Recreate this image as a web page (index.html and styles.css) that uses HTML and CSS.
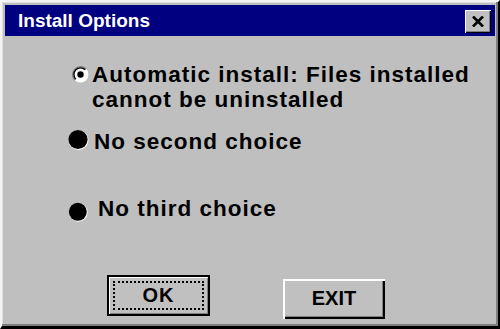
FILE: index.html
```html
<!DOCTYPE html>
<html>
<head>
<meta charset="utf-8">
<title>Install Options</title>
<link rel="stylesheet" href="styles.css">
</head>
<body>
<div class="window">
  <div class="titlebar">
    <span class="title">Install Options</span>
    <button class="close" aria-label="Close">
      <svg width="12" height="11" viewBox="0 0 12 11"><path d="M1 0.5 L11 10.5 M11 0.5 L1 10.5" stroke="#000" stroke-width="2.6" fill="none"/></svg>
    </button>
  </div>
  <div class="options">
    <div class="option opt1">
      <svg class="radio radio-on" width="17" height="17" viewBox="0 0 16 16">
        <circle cx="8" cy="8" r="7.5" fill="#fff"/>
        <path d="M2.7 13.3 A7.5 7.5 0 0 1 13.3 2.7" stroke="#808080" stroke-width="1.4" fill="none"/>
        <path d="M3.6 12.4 A6.2 6.2 0 0 1 12.4 3.6" stroke="#000" stroke-width="1.3" fill="none"/>
        <circle cx="8" cy="8" r="3" fill="#000"/>
      </svg>
      <span class="label"><span class="line">Automatic install: Files installed</span><span class="line">cannot be uninstalled</span></span>
    </div>
    <div class="option opt2">
      <svg class="radio radio-fill" width="21" height="22" viewBox="0 0 21 22">
        <circle cx="10.5" cy="11" r="10" fill="#fff"/>
        <circle cx="10" cy="10.5" r="9.6" fill="#000"/>
      </svg>
      <span class="label">No second choice</span>
    </div>
    <div class="option opt3">
      <svg class="radio radio-fill" width="20" height="20" viewBox="0 0 20 20">
        <circle cx="10.3" cy="10.3" r="9.4" fill="#fff"/>
        <circle cx="9.8" cy="9.8" r="9" fill="#000"/>
      </svg>
      <span class="label">No third choice</span>
    </div>
  </div>
  <div class="buttons">
    <button class="btn btn-default"><span class="focus">OK</span></button>
    <button class="btn btn-exit">EXIT</button>
  </div>
</div>
</body>
</html>
```

FILE: styles.css
```css
html, body {
  margin: 0;
  padding: 0;
  background: #c0c0c0;
}
.window {
  width: 500px;
  height: 329px;
  box-sizing: border-box;
  background: #bfbfbf;
  border-top: 2px solid #f4f4f4;
  border-left: 2px solid #f4f4f4;
  border-right: 2px solid #000;
  border-bottom: 3px solid #000;
  box-shadow: inset -2px -2px 0 #808080, inset 1px 1px 0 #dfdfdf;
  display: flex;
  flex-direction: column;
  font-family: "Liberation Sans", Arial, sans-serif;
}
.titlebar {
  margin: 3px 3px 0 3px;
  height: 31px;
  background: #000080;
  display: flex;
  align-items: center;
  justify-content: space-between;
  padding: 0 4px 0 13px;
}
.title {
  color: #fff;
  font-weight: bold;
  font-size: 19px;
  line-height: 22px;
  padding-top: 1px;
}
.close {
  width: 26px;
  height: 23px;
  padding: 0;
  margin: 1px 0 0 0;
  background: #c0c0c0;
  border: none;
  box-shadow: inset 1px 1px 0 #fff, inset -1px -1px 0 #000, inset -2px -2px 0 #808080;
  display: flex;
  align-items: center;
  justify-content: center;
}
.options {
  padding-top: 25.6px;
}
.option {
  display: flex;
  align-items: flex-start;
}
.label {
  font-weight: bold;
  font-size: 22.5px;
  line-height: 25.2px;
  letter-spacing: 1px;
  color: #000;
  white-space: nowrap;
}
.line {
  display: block;
}
.opt1 {
  padding-left: 68px;
}
.opt1 .radio {
  margin: 4px 3px 0 2px;
}
.opt2 {
  margin-top: 16.6px;
  padding-left: 66px;
}
.opt2 .radio {
  margin: 0 5px 0 0;
}
.opt3 {
  margin-top: 41.8px;
  padding-left: 66px;
}
.opt3 .radio {
  margin: 6px 10px 0 0;
}
.buttons {
  margin-top: 53.2px;
  padding-left: 105px;
  display: flex;
  align-items: flex-start;
  gap: 73px;
}
.btn {
  font-family: "Liberation Sans", Arial, sans-serif;
  font-weight: bold;
  font-size: 20px;
  color: #000;
  background: #c0c0c0;
  border: none;
  padding: 0;
  box-sizing: border-box;
}
.btn-default {
  width: 103px;
  height: 41px;
  border: 2px solid #000;
  box-shadow: inset 1px 1px 0 #fff, inset -1px -1px 0 #808080;
  padding: 4px;
  display: flex;
}
.focus {
  flex: 1;
  border: 2px dotted #000;
  display: flex;
  align-items: center;
  justify-content: center;
  letter-spacing: 1px;
}
.btn-exit {
  margin-top: 4px;
  width: 102px;
  height: 40px;
  box-shadow: inset 2px 2px 0 #fff, inset -2px -2px 0 #000, inset -3px -3px 0 #808080;
}
```
